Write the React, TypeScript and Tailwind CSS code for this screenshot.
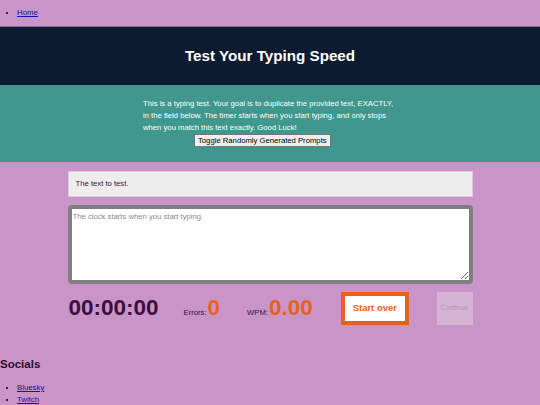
export default function App() {
  return (
    <div className="min-h-[405px] bg-[#c994c7] font-['Liberation_Sans',Arial,sans-serif] text-black">
      <nav className="h-[27px] border-b border-[#8a6a8f]">
        <ul className="list-disc pl-[17px] pt-[7px] text-[7.8px] leading-[12px]">
          <li>
            <a href="#" className="text-[#1a0dab] underline">Home</a>
          </li>
        </ul>
      </nav>

      <header className="flex h-[58px] items-center justify-center bg-[#0d1b31]">
        <h1 className="text-[15.2px] font-bold text-white">Test Your Typing Speed</h1>
      </header>

      <section className="h-[77px] bg-[#40978d] pt-[13px]">
        <div className="ml-[143px] w-[256px] text-[7.7px] leading-[12px] text-white">
          <p>
            This is a typing test. Your goal is to duplicate the provided text, EXACTLY, in the
            field below. The timer starts when you start typing, and only stops when you match
            this text exactly. Good Luck!
          </p>
          <div className="pl-[51px]">
            <button className="h-[13px] border border-[#767676] bg-[#efefef] px-[3px] text-[7.7px] leading-[11px] text-black">
              Toggle Randomly Generated Prompts
            </button>
          </div>
        </div>
      </section>

      <main className="mx-auto w-[405px] pt-[9px]">
        <div className="flex h-[26px] items-center border border-[#dcc7de] bg-[#ededed] px-[7px] text-[7.7px] text-[#3a1040]">
          The text to test.
        </div>

        <textarea
          className="mt-[8px] block h-[79px] w-full resize-y rounded-[4px] border-[4px] border-[#7f7f7f] bg-white px-[1px] py-[2px] text-[7.7px] leading-[11px] outline-none placeholder:text-[#8a8a8a]"
          placeholder="The clock starts when you start typing."
        />

        <div className="mt-[8px] flex h-[33px] items-center">
          <span className="w-[116px] pl-[1px] text-[22.5px] font-bold leading-none text-[#3b0f40]">00:00:00</span>
          <span className="flex items-baseline">
            <span className="text-[7.7px] text-[#3b0f40]">Errors:</span>
            <span className="ml-[1px] text-[22.5px] font-bold leading-none text-[#e6631f]">0</span>
          </span>
          <span className="ml-[27px] flex items-baseline">
            <span className="text-[7.7px] text-[#3b0f40]">WPM:</span>
            <span className="ml-[1px] text-[22.5px] font-bold leading-none text-[#e6631f]">0.00</span>
          </span>
          <button className="ml-[28px] h-[33px] w-[68px] border-[4px] border-[#e8601c] bg-white text-[9.5px] font-bold text-[#e6631f]">
            Start over
          </button>
          <button
            disabled
            className="ml-auto h-[33px] w-[36px] bg-[#d4b3d5] text-[7px] text-[#b892b8]"
          >
            Continue
          </button>
        </div>
      </main>

      <footer className="pt-[32px]">
        <h2 className="text-[11.5px] font-bold leading-[14px] text-[#2e0a33]">Socials</h2>
        <ul className="mt-[11px] list-disc pl-[17px] text-[7.8px] leading-[11.5px]">
          <li>
            <a href="#" className="text-[#1a0dab] underline">Bluesky</a>
          </li>
          <li>
            <a href="#" className="text-[#1a0dab] underline">Twitch</a>
          </li>
        </ul>
      </footer>
    </div>
  );
}
